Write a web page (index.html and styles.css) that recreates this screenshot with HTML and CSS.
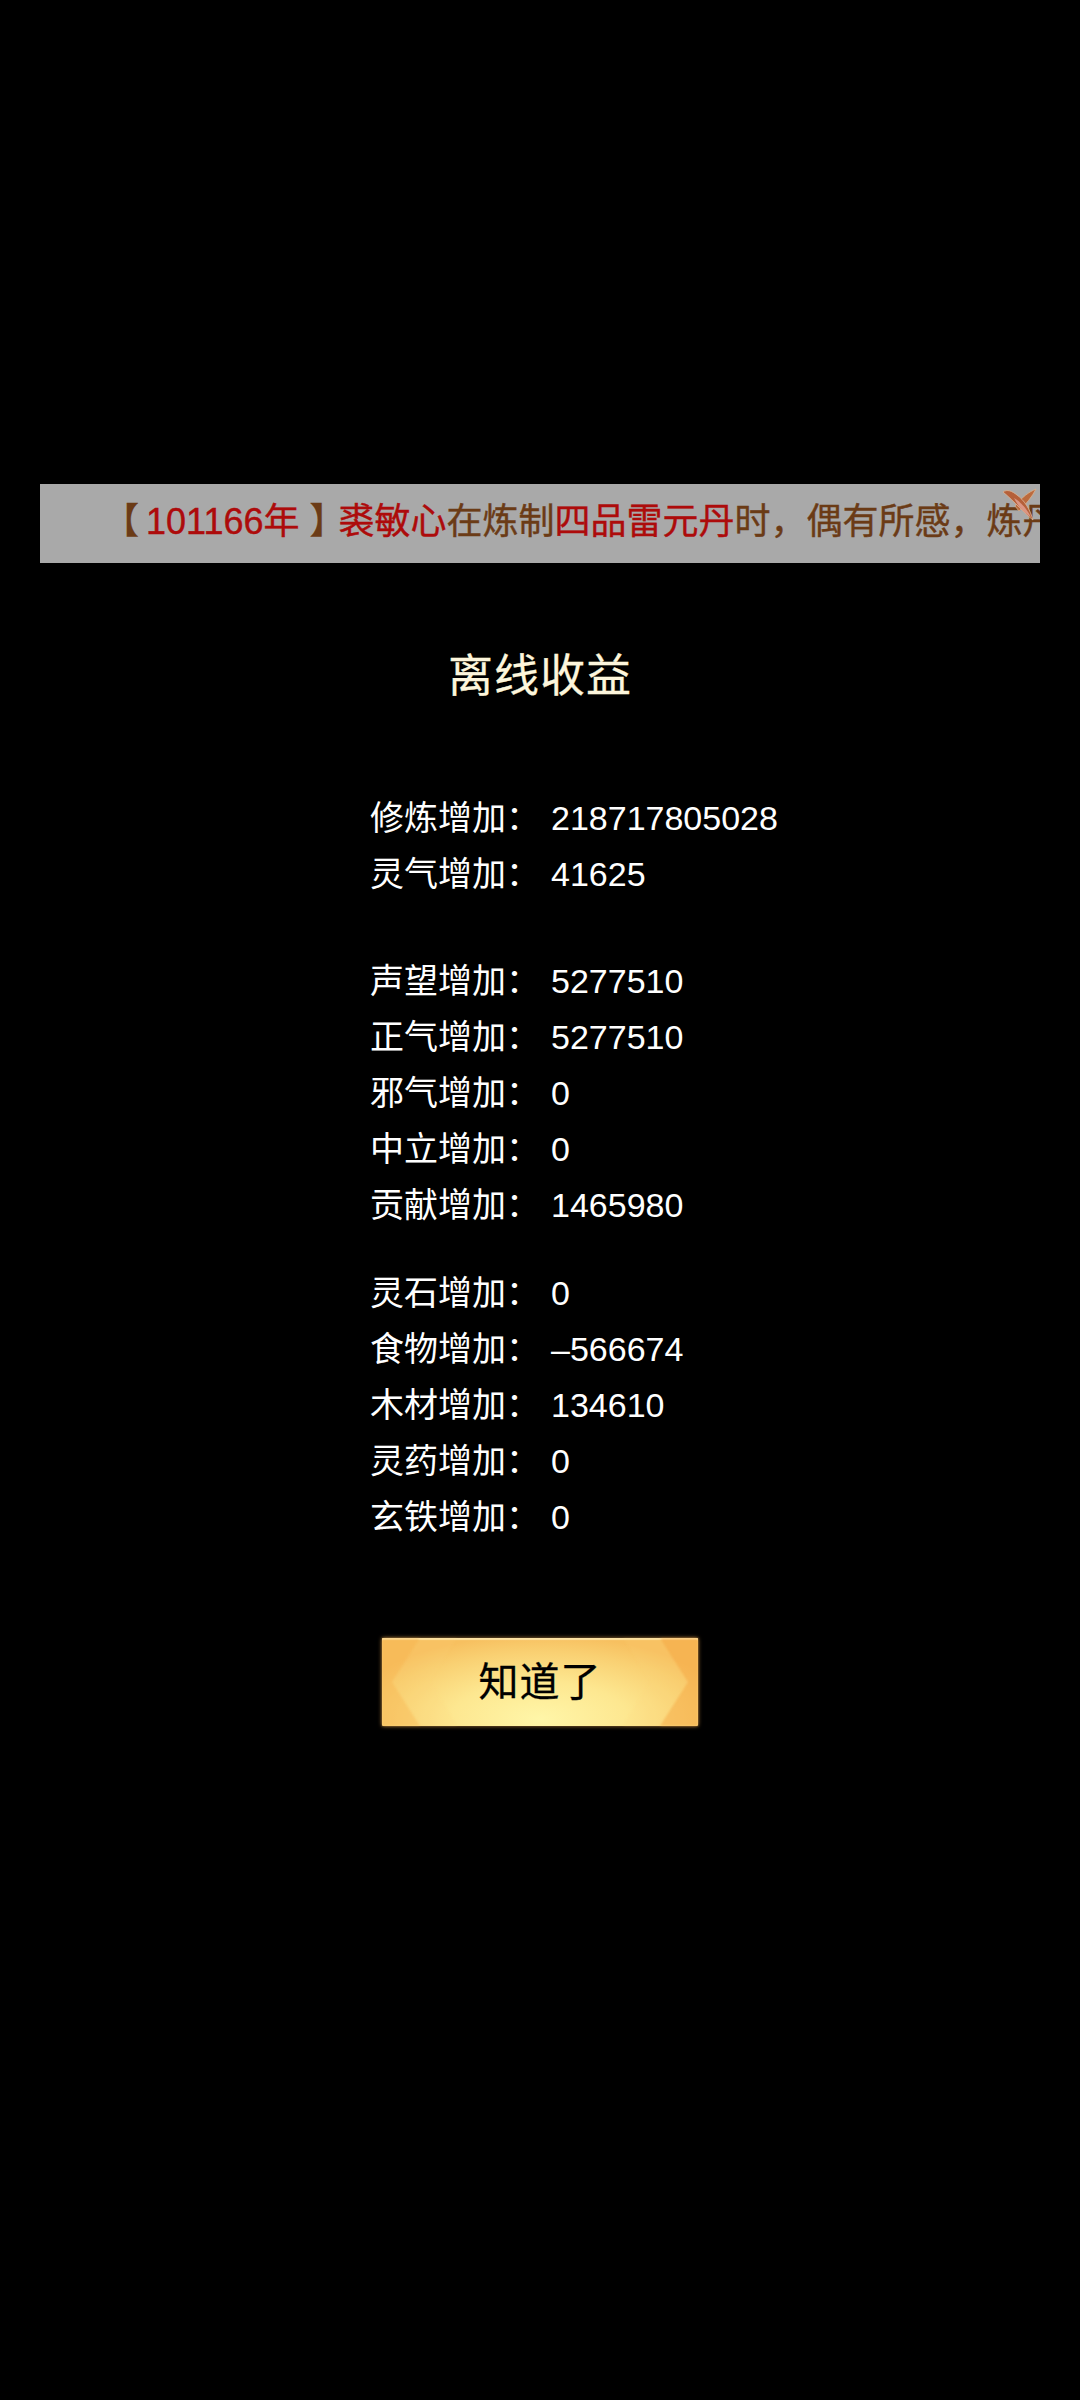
FILE: index.html
```html
<!DOCTYPE html>
<html lang="zh-CN">
<head>
    <meta charset="UTF-8">
    <meta name="viewport" content="width=device-width, initial-scale=1.0">
    <title>离线收益</title>
    <link rel="stylesheet" href="styles.css">
</head>
<body>
    <div class="page">
        <div class="notice">
            <p class="notice-text"><span class="open">【</span> <span class="red">101166年</span> <span class="shut">】</span><span class="red">裘敏心</span>在炼制<span class="red">四品雷元丹</span>时，偶有所感，炼丹</p>
            <svg class="close" viewBox="0 0 34 34" width="34" height="34">
                <path d="M33 1 C26 4 19 9 12 18 L16 23 C23 16 29 9 33 1 Z" fill="#bb6a3e" stroke="#d9b08c" stroke-width="0.8"/>
                <path d="M0 4 C4 1 9 3 14 7 C21 12 27 21 30 32 C22 26 11 13 0 4 Z" fill="#b5603a" stroke="#dcb898" stroke-width="0.8"/>
                <path d="M11 10 C17 13 24 21 28 29 C21 25 15 18 11 10 Z" fill="#dc9684"/>
            </svg>
        </div>

        <h1 class="title">离线收益</h1>

        <div class="group">
            <div class="row"><span class="label">修炼增加：</span><span>218717805028</span></div>
            <div class="row"><span class="label">灵气增加：</span><span>41625</span></div>
        </div>

        <div class="group group-mid">
            <div class="row"><span class="label">声望增加：</span><span>5277510</span></div>
            <div class="row"><span class="label">正气增加：</span><span>5277510</span></div>
            <div class="row"><span class="label">邪气增加：</span><span>0</span></div>
            <div class="row"><span class="label">中立增加：</span><span>0</span></div>
            <div class="row"><span class="label">贡献增加：</span><span>1465980</span></div>
        </div>

        <div class="group group-last">
            <div class="row"><span class="label">灵石增加：</span><span>0</span></div>
            <div class="row"><span class="label">食物增加：</span><span>–566674</span></div>
            <div class="row"><span class="label">木材增加：</span><span>134610</span></div>
            <div class="row"><span class="label">灵药增加：</span><span>0</span></div>
            <div class="row"><span class="label">玄铁增加：</span><span>0</span></div>
        </div>

        <button class="ok" type="button">
            <svg class="ok-bg" viewBox="0 0 316 88" preserveAspectRatio="none">
                <path d="M0 0 H38 L10 44 L38 88 H0 Z" fill="#f7b351" opacity="0.4"/>
                <path d="M316 0 H278 L306 44 L278 88 H316 Z" fill="#f5a843" opacity="0.5"/>
                <path d="M38 0 L10 44 L38 88 H75 L48 44 L75 0 Z" fill="#fbd57e" opacity="0.12"/>
                <path d="M278 0 L306 44 L278 88 H241 L268 44 L241 0 Z" fill="#fbd57e" opacity="0.12"/>
            </svg>
            <span class="ok-text">知道了</span>
        </button>
    </div>
</body>
</html>
```

FILE: styles.css
```css
html, body {
    margin: 0;
    background-color: #000;
}
body {
    font-family: "Liberation Sans", "Noto Sans CJK SC", sans-serif;
    color: #fff;
}
.page {
    display: flex;
    flex-direction: column;
    height: 2400px;
    padding-top: 484px;
    box-sizing: border-box;
}
.notice {
    position: relative;
    width: 1000px;
    height: 79px;
    margin-left: 40px;
    background-color: #a9a9a9;
    overflow: hidden;
}
.notice-text {
    margin: 0;
    padding-left: 63px;
    font-size: 36px;
    line-height: 76px;
    white-space: nowrap;
    color: #6b3b16;
    -webkit-text-stroke: 0.4px currentColor;
}
.red {
    color: #ad0b0b;
}
.open {
    margin-right: -3px;
}
.shut {
    margin-right: -7px;
}
.close {
    position: absolute;
    top: 4px;
    right: 3px;
}
.title {
    margin: 84px 0 83px;
    font-size: 45px;
    font-weight: 400;
    line-height: 60px;
    letter-spacing: 1px;
    text-align: center;
    color: #fdf6dc;
    -webkit-text-stroke: 0.3px currentColor;
}
.group {
    display: flex;
    flex-direction: column;
    padding-left: 370px;
}
.group-mid {
    margin-top: 51px;
}
.group-last {
    margin-top: 32px;
}
.row {
    display: flex;
    height: 56px;
    align-items: baseline;
    font-size: 34px;
    line-height: 56px;
}
.label {
    width: 180px;
    margin-right: 1px;
}
.ok {
    position: relative;
    align-self: flex-start;
    width: 316px;
    height: 88px;
    margin: 93px 0 0 382px;
    padding: 0 0 6px;
    border: none;
    border-radius: 1px;
    background: radial-gradient(ellipse 62% 95% at 50% 92%, #fff6a8 0%, #fde790 45%, #f9d072 80%, #f7c060 100%);
    box-shadow: inset 0 2px 1px #fbe2a4, 0 0 4px #a8783a;
    font-family: inherit;
    color: #000;
}
.ok-bg {
    position: absolute;
    top: 0;
    left: 0;
    width: 100%;
    height: 100%;
    filter: blur(1px);
}
.ok-text {
    position: relative;
    font-size: 40px;
    letter-spacing: 1px;
    -webkit-text-stroke: 0.3px currentColor;
}
```
